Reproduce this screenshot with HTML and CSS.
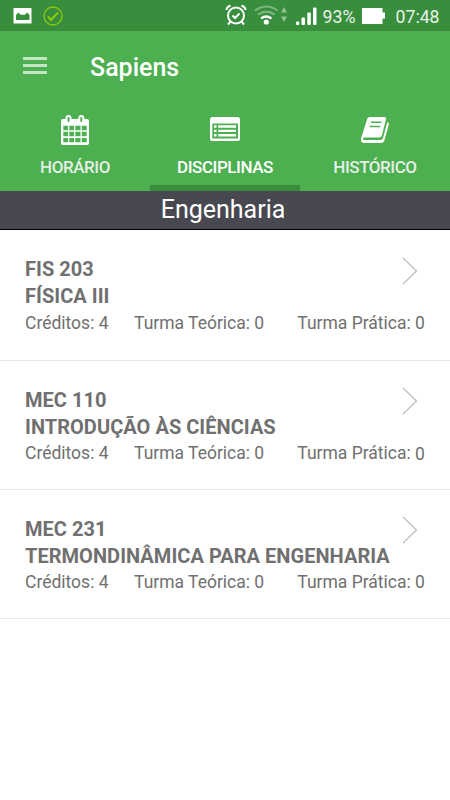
FILE: index.html
```html
<!DOCTYPE html>
<html lang="pt-BR">
<head>
<meta charset="utf-8">
<title>Sapiens</title>
<link rel="stylesheet" href="styles.css">
</head>
<body>
<div class="status">
  <svg class="photo" width="20" height="16" viewBox="0 0 20 16"><path fill="#fff" d="M.5 0h18v15.500H.5z"/><path fill="#388e3c" d="M3 12V7l2.500-2.500L8 7l1-.5L11.500 7 14 4.500 16.500 7v5z"/></svg>
  <svg class="check" width="20" height="20" viewBox="0 0 20 20" fill="none" stroke="#8bc90c"><circle cx="10" cy="10" r="9" stroke-width="1.300"/><path d="M5 10.500l3 3.500 7-7.500" stroke-width="2"/></svg>
  <svg class="signals" width="94" height="24" viewBox="0 0 94 24">
    <g fill="none" stroke="#fff" stroke-width="2"><circle cx="11" cy="12.500" r="8"/><path d="M7.500 12.500l2.500 2.500 4.500-4.500M5.500 18.500L3 21.500M16.500 18.500l2.500 3M1.500 7q0-3 4-4.500M20.500 7q0-3-4-4.500"/></g>
    <g fill="none" stroke="#fff" stroke-width="2.200"><path opacity=".35" d="M30 7.500q11.500-8 22.500 0"/><path opacity=".35" d="M33 11.700q8.500-6 16.500 0"/><path d="M36 15.500q5-4 10.500 0"/></g>
    <circle cx="41.300" cy="19" r="2.600" fill="#fff"/>
    <path fill="#fff" opacity=".45" d="M56 9.500h6L59 4zM56 13.500h6l-3 5.500z"/>
    <g fill="#fff"><rect x="71" y="18.500" width="3.300" height="3.500" rx="1"/><rect x="76.500" y="14.500" width="3.500" height="7.500" rx="1"/><rect x="82.300" y="9.500" width="3.500" height="12.500" rx="1"/><rect x="88" y="4.500" width="3.500" height="17.500" rx="1"/></g>
  </svg>
  <span class="percent">93%</span>
  <svg class="battery" width="26" height="18" viewBox="0 0 26 18"><path fill="#fff" d="M1 1h20.500v4.500H24v6h-2.500V17H1z"/></svg>
  <span class="clock">07:48</span>
</div>
<header>
  <div class="toolbar">
    <div class="menu"><i></i><i></i><i></i></div>
    <h1>Sapiens</h1>
  </div>
  <nav>
    <div class="tab">
      <svg width="30" height="32" viewBox="0 0 30 32"><rect x="1" y="6" width="28" height="26" rx="2" fill="#fff"/><path fill="#4caf50" d="M3.300 12.700H8v4.600H3.300zm6 0H14v4.600H9.300zm6 0h5.200v4.600h-5.200zm6.500 0h4.900v4.600h-4.900zM3.300 18.700H8v4.600H3.300zm6 0H14v4.600H9.300zm6 0h5.200v4.600h-5.200zm6.500 0h4.900v4.600h-4.900zM3.300 24.900H8v4.400H3.300zm6 0H14v4.400H9.300zm6 0h5.200v4.400h-5.200zm6.500 0h4.900v4.400h-4.900z"/><g fill="#4caf50" stroke="#fff" stroke-width="2"><rect x="6.500" y="3" width="4" height="7" rx="2"/><rect x="19.300" y="3" width="4" height="7" rx="2"/></g></svg>
      <span>HORÁRIO</span>
    </div>
    <div class="tab active">
      <svg width="30" height="32" viewBox="0 0 30 32"><rect y="4" width="30" height="24" rx="2.500" fill="#fff"/><path fill="#4caf50" d="M2.300 10.500H28v15H2.300z"/><path fill="#fff" d="M4 12.300h2.500v2.400H4zm4.200 0H26v2.400H8.200zM4 16.700h2.500v2.400H4zm4.200 0H26v2.400H8.200zM4 21.100h2.500v2.400H4zm4.200 0H26v2.400H8.200z"/></svg>
      <span>DISCIPLINAS</span>
    </div>
    <div class="tab">
      <svg width="30" height="32" viewBox="0 0 30 32"><path fill="#fff" d="M9.500 4h15q2 0 1.500 2l-4 16q-.5 2.500-3 2.500H4.500Q3 24.500 3 26q0 1 1.500 1h16q2 0 2.500-2L27.300 9q2 .5 1.500 2.500L24.500 27q-.7 3-3.500 3H4q-3.500-.5-3-4.500L7 6.500Q7.500 4 9.500 4z"/><path stroke="#4caf50" stroke-width="1.500" d="M11 9.200h10.500M9.700 13.500h10.500"/></svg>
      <span>HISTÓRICO</span>
    </div>
  </nav>
</header>
<h2><span>Engenharia</span></h2>
<main>
  <article class="first">
    <div class="heading"><strong class="code">FIS 203</strong><svg width="16" height="28" viewBox="0 0 16 28"><path d="M1 1l13.500 13L1 27"/></svg></div>
    <strong class="name">FÍSICA III</strong>
    <div class="details"><span>Créditos: 4</span><span>Turma Teórica: 0</span><span>Turma Prática: 0</span></div>
  </article>
  <article>
    <div class="heading"><strong class="code">MEC 110</strong><svg width="16" height="28" viewBox="0 0 16 28"><path d="M1 1l13.500 13L1 27"/></svg></div>
    <strong class="name">INTRODUÇÃO ÀS CIÊNCIAS</strong>
    <div class="details"><span>Créditos: 4</span><span>Turma Teórica: 0</span><span>Turma Prática: <span class="lowered">0</span></span></div>
  </article>
  <article>
    <div class="heading"><strong class="code">MEC 231</strong><svg width="16" height="28" viewBox="0 0 16 28"><path d="M1 1l13.500 13L1 27"/></svg></div>
    <strong class="name">TERMONDINÂMICA PARA ENGENHARIA</strong>
    <div class="details"><span>Créditos: 4</span><span>Turma Teórica: 0</span><span>Turma Prática: 0</span></div>
  </article>
</main>
</body>
</html>
```
FILE: styles.css
```css
* { box-sizing: border-box; }
body { margin: 0; height: 800px; background: #fff; font-family: Roboto, sans-serif; overflow: hidden; }
svg { display: block; flex: none; }
.status { height: 31px; background: #388e3c; color: #e9f3e9; display: flex; align-items: center; font-size: 18px; white-space: nowrap; }
.photo { margin-left: 13px; }
.check { margin-left: 9.500px; }
.signals { margin-left: 162px; margin-bottom: 1px; }
.percent { width: 33px; margin-left: 4px; padding-top: 2px; font-size: 17.800px; }
.battery { margin-left: 5px; }
.clock { margin-left: 9px; padding-top: 2px; font-size: 17.700px; }
header { height: 160px; background: #4caf50; color: #fff; }
.toolbar { height: 74px; display: flex; align-items: center; padding-left: 23px; }
.menu { width: 24px; display: grid; gap: 4.500px; margin-bottom: 5px; }
.menu i { height: 2.500px; background: #c4e6c5; }
h1 { margin: 0 0 0 43px; font-size: 25px; font-weight: 500; line-height: 30px; }
nav { height: 86px; display: grid; grid-template-columns: repeat(3, 150px); }
.tab { display: flex; flex-direction: column; align-items: center; padding-top: 8px; color: #e5efe5; font-size: 17px; letter-spacing: -.45px; font-weight: 500; line-height: 24px; border-bottom: 6px solid transparent; }
.tab span { margin-top: 10px; white-space: nowrap; }
.active { color: #fff; border-color: #388e3c; }
h2 { margin: 0; height: 39px; background: #484851; border-bottom: 1px solid #08000e; color: #fff; text-align: center; font-size: 25px; line-height: 37px; font-weight: 400; padding-right: 4px; }
article { height: 129px; padding: 25px 25px 0; border-bottom: 1px solid #e6e6e6; color: #707070; }
.first { height: 131px; }
.heading { display: flex; justify-content: space-between; height: 27px; padding-right: 7px; }
.heading svg { margin-top: 1px; }
.first .heading svg { margin-top: 2px; }
.heading path { fill: none; stroke: #bcbcbc; stroke-width: 1.200; }
strong { font-size: 20px; letter-spacing: .04px; line-height: 28px; font-weight: 700; white-space: nowrap; }
.name { display: block; height: 27px; }
.details { display: grid; grid-template-columns: 109px 163.300px 127px; font-size: 17.500px; line-height: 26px; white-space: nowrap; }
.first .details { padding-top: 1px; }
.lowered { position: relative; top: 1px; }
```
